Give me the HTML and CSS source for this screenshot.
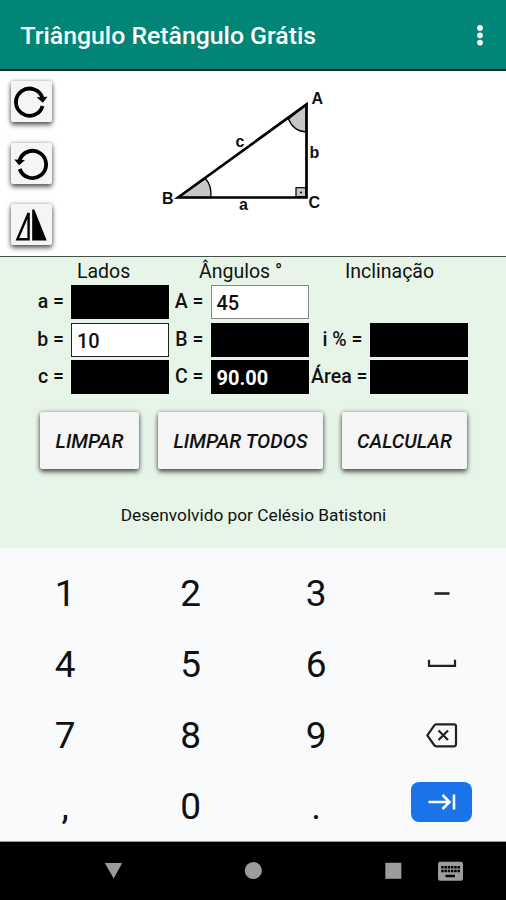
FILE: index.html
```html
<!DOCTYPE html>
<html lang="pt-BR">
<head>
  <meta charset="UTF-8" />
  <title>Triângulo Retângulo Grátis</title>
  <meta name="viewport" content="width=device-width, initial-scale=1.0" />
  <link rel="stylesheet" href="styles.css">
</head>
<body>
  <header class="topbar">
    <h1>Triângulo Retângulo Grátis</h1>
    <svg class="menu" width="8" height="22" viewBox="0 0 8 22" fill="#fff">
      <circle cx="4" cy="3" r="2.9" />
      <circle cx="4" cy="10.3" r="2.9" />
      <circle cx="4" cy="17.6" r="2.9" />
    </svg>
  </header>

  <section class="desenho">
    <div class="ferramentas">
      <button type="button" class="btn btn-icone" aria-label="Girar à direita">
        <svg width="41" height="41" viewBox="0 0 41 41">
          <path d="M31.5 17A13.6 13.6 0 1 0 31.6 25" fill="none" stroke="#000" stroke-width="3.8" />
          <path d="M25.7 16.2L36.5 15.7L31.8 21.7Z" fill="#000" />
        </svg>
      </button>
      <button type="button" class="btn btn-icone" aria-label="Girar à esquerda">
        <svg width="41" height="41" viewBox="0 0 41 41">
          <path d="M8.5 17.5A13.6 13.6 0 1 1 8.7 26" fill="none" stroke="#000" stroke-width="3.8" />
          <path d="M3.3 16.5L14 17L8.2 22.2Z" fill="#000" />
        </svg>
      </button>
      <button type="button" class="btn btn-icone" aria-label="Espelhar">
        <svg width="41" height="41" viewBox="0 0 41 41">
          <path d="M17.6 9V35.2H6.4Z" fill="none" stroke="#000" stroke-width="2.4" />
          <path d="M21.2 5.5V36.4H35.7L23.3 5.5Z" fill="#000" />
        </svg>
      </button>
    </div>
    <svg class="triangulo" width="190" height="140" viewBox="150 80 190 140">
      <path d="M177.5 197.5L205.5 178.5Q212 186 210.8 197.5Z" fill="#c6c6c6" stroke="#000" stroke-width="1.3" />
      <path d="M306.5 104L288.5 119Q293.5 131.5 306.5 132Z" fill="#c6c6c6" stroke="#000" stroke-width="1.3" />
      <rect x="296" y="187.7" width="10" height="9" fill="#c6c6c6" stroke="#000" stroke-width="1.2" />
      <circle cx="301" cy="192.5" r="1" />
      <path d="M178 197.5L306.5 104.5V197.5Z" fill="none" stroke="#000" stroke-width="2.7" />
      <text x="311.5" y="104">A</text>
      <text x="162" y="203.5">B</text>
      <text x="308.5" y="207.5">C</text>
      <text x="235.5" y="147">c</text>
      <text x="309.5" y="158">b</text>
      <text x="239" y="210">a</text>
    </svg>
  </section>

  <main class="painel">
    <div class="titulos">
      <span>Lados</span>
      <span>Ângulos °</span>
      <span>Inclinação</span>
    </div>

    <form class="campos">
      <label>a =</label>
      <div class="campo"></div>
      <label>A =</label>
      <div class="campo editado claro">45</div>
      <span></span>
      <span></span>

      <label>b =</label>
      <div class="campo editado">10</div>
      <label>B =</label>
      <div class="campo"></div>
      <label>i % =</label>
      <div class="campo"></div>

      <label>c =</label>
      <div class="campo"></div>
      <label>C =</label>
      <div class="campo">90.00</div>
      <label class="area">Área =</label>
      <div class="campo"></div>
    </form>

    <div class="acoes">
      <button type="button" class="btn limpar">LIMPAR</button>
      <button type="button" class="btn limpar-todos">LIMPAR TODOS</button>
      <button type="button" class="btn calcular">CALCULAR</button>
    </div>

    <p class="autor">Desenvolvido por Celésio Batistoni</p>
  </main>

  <section class="teclado">
    <span>1</span>
    <span>2</span>
    <span>3</span>
    <svg width="32" height="26" viewBox="0 0 32 26"><path d="M8.5 13.5H23.500" stroke="#222" stroke-width="2.6" /></svg>

    <span>4</span>
    <span>5</span>
    <span>6</span>
    <svg width="32" height="26" viewBox="0 0 32 26"><path d="M3 8.8V14.8H29V8.8" fill="none" stroke="#222" stroke-width="2.2" /></svg>

    <span>7</span>
    <span>8</span>
    <span>9</span>
    <svg width="32" height="26" viewBox="0 0 32 26" fill="none" stroke="#222" stroke-width="2.2">
      <path d="M10 2.3H28Q30 2.3 30 4.3V22.3Q30 24.3 28 24.3H10L8.5 23.5L1.3 13.3L8.5 3.1Z" stroke-linejoin="round" />
      <path d="M12.500 8.5L22 18.1M22 8.5L12.5 18.1" />
    </svg>

    <span>,</span>
    <span>0</span>
    <span>.</span>
    <div class="proximo">
      <svg width="32" height="20" viewBox="0 0 32 20" fill="none" stroke="#fff" stroke-width="2.6">
        <path d="M2.5 10H23M16.5 3L23.5 10L16.5 17M28 2.5V17.5" />
      </svg>
    </div>
  </section>

  <footer class="navegacao">
    <svg width="506" height="56" viewBox="0 0 506 56" fill="#9c9c9c">
      <path d="M104.8 21H122.2L113.7 36.5Z" />
      <circle cx="253.3" cy="28.5" r="8.6" />
      <rect x="385.3" y="20.8" width="16" height="16" />
      <rect x="438" y="19.8" width="25" height="19" rx="2" />
      <g stroke="#000" fill="none">
        <path d="M441.2 25.3H460M441.2 29H460" stroke-width="2.5" stroke-dasharray="2.5 .75" />
        <path d="M445.5 34H455" stroke-width="2.5" />
      </g>
    </svg>
  </footer>
</body>
</html>
```

FILE: styles.css
```css
* {
  box-sizing: border-box;
}
body {
  margin: 0;
  width: 506px;
  height: 900px;
  overflow: hidden;
  display: flex;
  flex-direction: column;
  font-family: Roboto, "Liberation Sans", sans-serif;
  color: #111;
  background-color: #000;
}
.topbar {
  height: 71px;
  padding: 2px 22px 0 20.5px;
  display: flex;
  align-items: center;
  justify-content: space-between;
  background-color: #018577;
  border-bottom: 2px solid #082722;
}
h1 {
  margin: 0;
  font-size: 24.8px;
  font-weight: 500;
  color: #fff;
}
.btn {
  padding: 0;
  border: none;
  border-radius: 2px;
  background-color: #f5f5f5;
  color: #111;
  box-shadow: 0 3px 5px rgba(0,0,0,0.6), 0 0 4px rgba(0,0,0,0.3);
}
.desenho {
  height: 185px;
  padding: 10px 0 0 11px;
  display: flex;
  background-color: #fff;
}
.ferramentas {
  width: 139px;
  display: flex;
  flex-direction: column;
  gap: 20.5px;
}
.btn-icone {
  width: 41px;
  height: 41px;
}
.btn-icone svg {
  display: block;
}
.triangulo {
  margin-top: -1px;
}
.triangulo text {
  font-family: "Liberation Sans", Arial, sans-serif;
  font-size: 16px;
  font-weight: bold;
  fill: #111;
}
.painel {
  height: 292px;
  border-top: 1px solid #48504a;
  background-color: #e7f5e9;
}
.titulos {
  height: 28px;
  padding: 3px 0 0 77px;
  display: grid;
  grid-template-columns: 122px 146px auto;
  font-size: 19.5px;
  line-height: 24px;
}
.campos {
  display: grid;
  grid-template-columns: 71px 98px 41.5px 98px 61px 98px;
  grid-auto-rows: 34px;
  row-gap: 3.5px;
}
label {
  padding-right: 7px;
  font-size: 19.5px;
  font-weight: 500;
  line-height: 34px;
  text-align: right;
  white-space: nowrap;
}
.area {
  padding-right: 2px;
}
.campo {
  padding-left: 6px;
  background-color: #000;
  color: #fff;
  font-size: 20px;
  font-weight: 700;
  line-height: 36px;
}
.editado {
  padding-left: 5px;
  border: 1px solid #222;
  background-color: #fff;
  color: #111;
  font-weight: 500;
  line-height: 34px;
}
.claro {
  border-color: #888;
}
.acoes {
  padding: 18px 0 0 40px;
  display: flex;
  gap: 19px;
}
.acoes .btn {
  height: 57px;
  padding-top: 2px;
  font-family: inherit;
  font-size: 19.7px;
  font-style: italic;
  font-weight: 500;
}
.limpar {
  width: 99px;
}
.limpar-todos {
  width: 165px;
}
.calcular {
  width: 125px;
}
.autor {
  margin: 36px 0 0;
  padding-left: 1px;
  font-size: 17.3px;
  line-height: 21px;
  text-align: center;
}
.teclado {
  height: 294px;
  padding: 9.5px 1.5px 0 2.5px;
  display: grid;
  grid-template-columns: repeat(4, 125.5px);
  grid-template-rows: repeat(4, 71px);
  place-items: center;
  background-color: #f8fafc;
  border-bottom: 1px solid #999;
  font-size: 37px;
}
.proximo {
  width: 61px;
  height: 40px;
  margin-bottom: 9px;
  border-radius: 8px;
  background-color: #1a73e8;
  display: flex;
  align-items: center;
  justify-content: center;
}
.navegacao svg {
  display: block;
}
```
